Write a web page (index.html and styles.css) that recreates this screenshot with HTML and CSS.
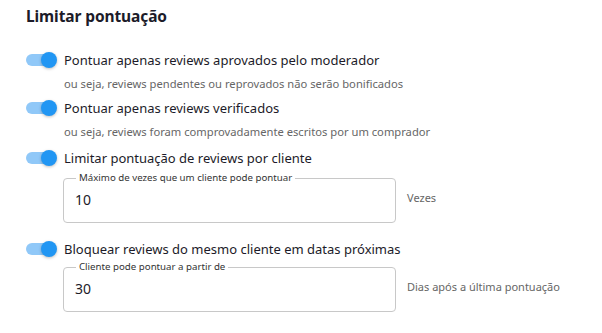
FILE: index.html
```html
<!DOCTYPE html>
<html lang="pt-BR">
<head>
    <meta charset="UTF-8">
    <meta name="viewport" content="width=device-width, initial-scale=1.0">
    <title>Limitar pontuação</title>
    <link rel="stylesheet" href="styles.css">
</head>
<body>
    <div class="panel">
        <h2 class="panel-title">Limitar pontuação</h2>

        <div class="option option-first">
            <span class="switch"><span class="switch-knob"></span></span>
            <span class="option-label">Pontuar apenas reviews aprovados pelo moderador</span>
        </div>
        <div class="option-help">ou seja, reviews pendentes ou reprovados não serão bonificados</div>

        <div class="option">
            <span class="switch"><span class="switch-knob"></span></span>
            <span class="option-label">Pontuar apenas reviews verificados</span>
        </div>
        <div class="option-help">ou seja, reviews foram comprovadamente escritos por um comprador</div>

        <div class="option option-spaced">
            <span class="switch"><span class="switch-knob"></span></span>
            <span class="option-label">Limitar pontuação de reviews por cliente</span>
        </div>
        <div class="field-row">
            <fieldset class="field">
                <legend>Máximo de vezes que um cliente pode pontuar</legend>
                <input type="text" value="10">
            </fieldset>
            <span class="field-suffix">Vezes</span>
        </div>

        <div class="option option-wide">
            <span class="switch"><span class="switch-knob"></span></span>
            <span class="option-label">Bloquear reviews do mesmo cliente em datas próximas</span>
        </div>
        <div class="field-row field-row-tight">
            <fieldset class="field">
                <legend>Cliente pode pontuar a partir de</legend>
                <input type="text" value="30">
            </fieldset>
            <span class="field-suffix">Dias após a última pontuação</span>
        </div>
    </div>
</body>
</html>
```

FILE: styles.css
```css
* {
    margin: 0;
    padding: 0;
    box-sizing: border-box;
}

body {
    font-family: 'Noto Sans', sans-serif;
    background: #fff;
    color: #1c1b29;
}

.panel {
    padding: 6px 26px;
}

.panel-title {
    font-size: 15.5px;
    font-weight: 700;
    line-height: 20px;
    letter-spacing: -0.1px;
}

.option {
    display: flex;
    align-items: center;
    gap: 8px;
    height: 20px;
    margin-top: 6px;
}

.option-first {
    margin-top: 24px;
}

.option-spaced {
    margin-top: 8px;
}

.option-wide {
    margin-top: 16px;
}

.option-label {
    font-size: 13px;
}

.switch {
    position: relative;
    width: 30px;
    height: 12px;
    flex-shrink: 0;
    border-radius: 6px;
    background: #90c8f8;
}

.switch-knob {
    position: absolute;
    top: -2px;
    right: -1px;
    width: 16px;
    height: 16px;
    border-radius: 50%;
    background: #2196f3;
    box-shadow: 0 1px 3px rgba(0,0,0,0.25);
}

.option-help {
    margin: 6px 0 0 38px;
    font-size: 11.2px;
    line-height: 16px;
    color: #666;
}

.field-row {
    display: flex;
    align-items: center;
    gap: 11px;
    margin: 3px 0 0 37px;
}

.field-row-tight {
    margin-top: 1px;
}

.field {
    width: 333px;
    height: 52px;
    border: 1px solid #c8c8c8;
    border-radius: 4px;
    padding: 0 11px;
}

.field legend {
    font-size: 9.7px;
    line-height: 14px;
    margin-left: 1px;
    padding: 0 3px;
    color: #333;
}

.field input {
    display: block;
    width: 100%;
    height: 28px;
    border: none;
    outline: none;
    font-family: 'Noto Sans', sans-serif;
    font-size: 14px;
    color: #1c1b29;
    background: transparent;
}

.field-suffix {
    font-size: 11px;
    color: #666;
}
```
